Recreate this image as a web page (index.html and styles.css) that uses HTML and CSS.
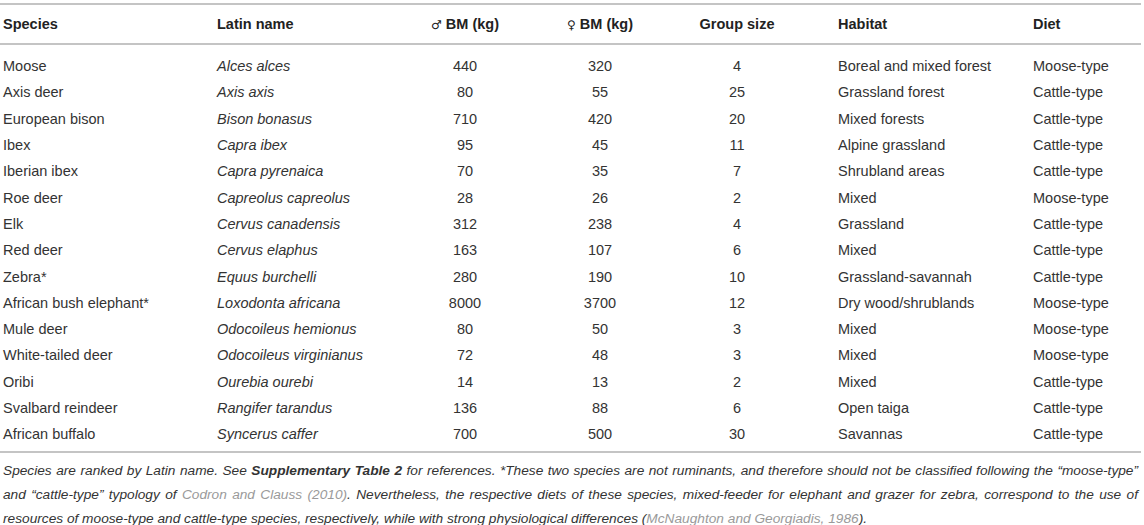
FILE: index.html
```html
<!DOCTYPE html>
<html>
<head>
<meta charset="utf-8">
<link rel="stylesheet" href="styles.css">
</head>
<body>
<div class="wrap">
<table class="data">
  <colgroup>
    <col class="c-species"><col class="c-latin"><col class="c-male"><col class="c-female"><col class="c-group"><col class="c-habitat"><col class="c-diet">
  </colgroup>
  <thead>
    <tr>
      <th class="l">Species</th>
      <th class="l">Latin name</th>
      <th class="c"><span class="sym">♂</span> BM (kg)</th>
      <th class="c"><span class="sym">♀</span> BM (kg)</th>
      <th class="c">Group size</th>
      <th class="l hab">Habitat</th>
      <th class="l">Diet</th>
    </tr>
  </thead>
  <tbody>
    <tr><td>Moose</td><td class="i">Alces alces</td><td class="c">440</td><td class="c">320</td><td class="c">4</td><td class="hab">Boreal and mixed forest</td><td>Moose-type</td></tr>
    <tr><td>Axis deer</td><td class="i">Axis axis</td><td class="c">80</td><td class="c">55</td><td class="c">25</td><td class="hab">Grassland forest</td><td>Cattle-type</td></tr>
    <tr><td>European bison</td><td class="i">Bison bonasus</td><td class="c">710</td><td class="c">420</td><td class="c">20</td><td class="hab">Mixed forests</td><td>Cattle-type</td></tr>
    <tr><td>Ibex</td><td class="i">Capra ibex</td><td class="c">95</td><td class="c">45</td><td class="c">11</td><td class="hab">Alpine grassland</td><td>Cattle-type</td></tr>
    <tr><td>Iberian ibex</td><td class="i">Capra pyrenaica</td><td class="c">70</td><td class="c">35</td><td class="c">7</td><td class="hab">Shrubland areas</td><td>Cattle-type</td></tr>
    <tr><td>Roe deer</td><td class="i">Capreolus capreolus</td><td class="c">28</td><td class="c">26</td><td class="c">2</td><td class="hab">Mixed</td><td>Moose-type</td></tr>
    <tr><td>Elk</td><td class="i">Cervus canadensis</td><td class="c">312</td><td class="c">238</td><td class="c">4</td><td class="hab">Grassland</td><td>Cattle-type</td></tr>
    <tr><td>Red deer</td><td class="i">Cervus elaphus</td><td class="c">163</td><td class="c">107</td><td class="c">6</td><td class="hab">Mixed</td><td>Cattle-type</td></tr>
    <tr><td>Zebra*</td><td class="i">Equus burchelli</td><td class="c">280</td><td class="c">190</td><td class="c">10</td><td class="hab">Grassland-savannah</td><td>Cattle-type</td></tr>
    <tr><td>African bush elephant*</td><td class="i">Loxodonta africana</td><td class="c">8000</td><td class="c">3700</td><td class="c">12</td><td class="hab">Dry wood/shrublands</td><td>Moose-type</td></tr>
    <tr><td>Mule deer</td><td class="i">Odocoileus hemionus</td><td class="c">80</td><td class="c">50</td><td class="c">3</td><td class="hab">Mixed</td><td>Moose-type</td></tr>
    <tr><td>White-tailed deer</td><td class="i">Odocoileus virginianus</td><td class="c">72</td><td class="c">48</td><td class="c">3</td><td class="hab">Mixed</td><td>Moose-type</td></tr>
    <tr><td>Oribi</td><td class="i">Ourebia ourebi</td><td class="c">14</td><td class="c">13</td><td class="c">2</td><td class="hab">Mixed</td><td>Cattle-type</td></tr>
    <tr><td>Svalbard reindeer</td><td class="i">Rangifer tarandus</td><td class="c">136</td><td class="c">88</td><td class="c">6</td><td class="hab">Open taiga</td><td>Cattle-type</td></tr>
    <tr class="last"><td>African buffalo</td><td class="i">Syncerus caffer</td><td class="c">700</td><td class="c">500</td><td class="c">30</td><td class="hab">Savannas</td><td>Cattle-type</td></tr>
  </tbody>
</table>
<p class="note">Species are ranked by Latin name. See <b>Supplementary Table 2</b> for references. *These two species are not ruminants, and therefore should not be classified following the <span class="nw">“moose-type”</span> and <span class="nw">“cattle-type”</span> typology of <span class="ref">Codron and Clauss (2010)</span>. Nevertheless, the respective diets of these species, mixed-feeder for elephant and grazer for zebra, correspond to the use of resources of moose-type and cattle-type species, respectively, while with strong physiological differences (<span class="ref">McNaughton and Georgiadis, 1986</span>).</p>
</div>
</body>
</html>
```
FILE: styles.css
```css
html, body {
  margin: 0;
  padding: 0;
  background: #fff;
}
body {
  font-family: "Liberation Sans", Arial, sans-serif;
  color: #333;
}
.wrap {
  width: 1141px;
  padding-top: 3px;
}
.data {
  width: 100%;
  border-collapse: collapse;
  font-size: 14.5px;
}
.c-species { width: 214px; }
.c-latin { width: 186px; }
.c-male { width: 130px; }
.c-female { width: 140px; }
.c-group { width: 134px; }
.c-habitat { width: 226px; }
.data thead tr {
  border-top: 2px solid #c4c4c4;
  border-bottom: 2px solid #c4c4c4;
}
.data th {
  font-weight: bold;
  height: 38px;
  padding: 0 3px;
  vertical-align: middle;
  color: #222;
}
.sym {
  font-family: "DejaVu Sans", sans-serif;
  font-weight: normal;
  font-size: 12px;
}
.data td {
  height: 26.3px;
  padding: 0 3px;
  vertical-align: middle;
  line-height: 18px;
}
.data tbody tr:first-child td {
  padding-top: 8px;
}
.data tbody tr.last td {
  padding-bottom: 4px;
}
.data tbody tr.last {
  border-bottom: 2px solid #c4c4c4;
}
.l { text-align: left; }
.c { text-align: center; }
.hab { padding-left: 34px !important; }
.i { font-style: italic; }
.note {
  margin: 0;
  padding: 6px 3px 0 3px;
  font-size: 13.7px;
  font-style: italic;
  line-height: 24px;
  text-align: justify;
  color: #333;
}
.note b { font-weight: bold; }
.nw { white-space: nowrap; }
.ref { color: #9a9a9a; }
```
